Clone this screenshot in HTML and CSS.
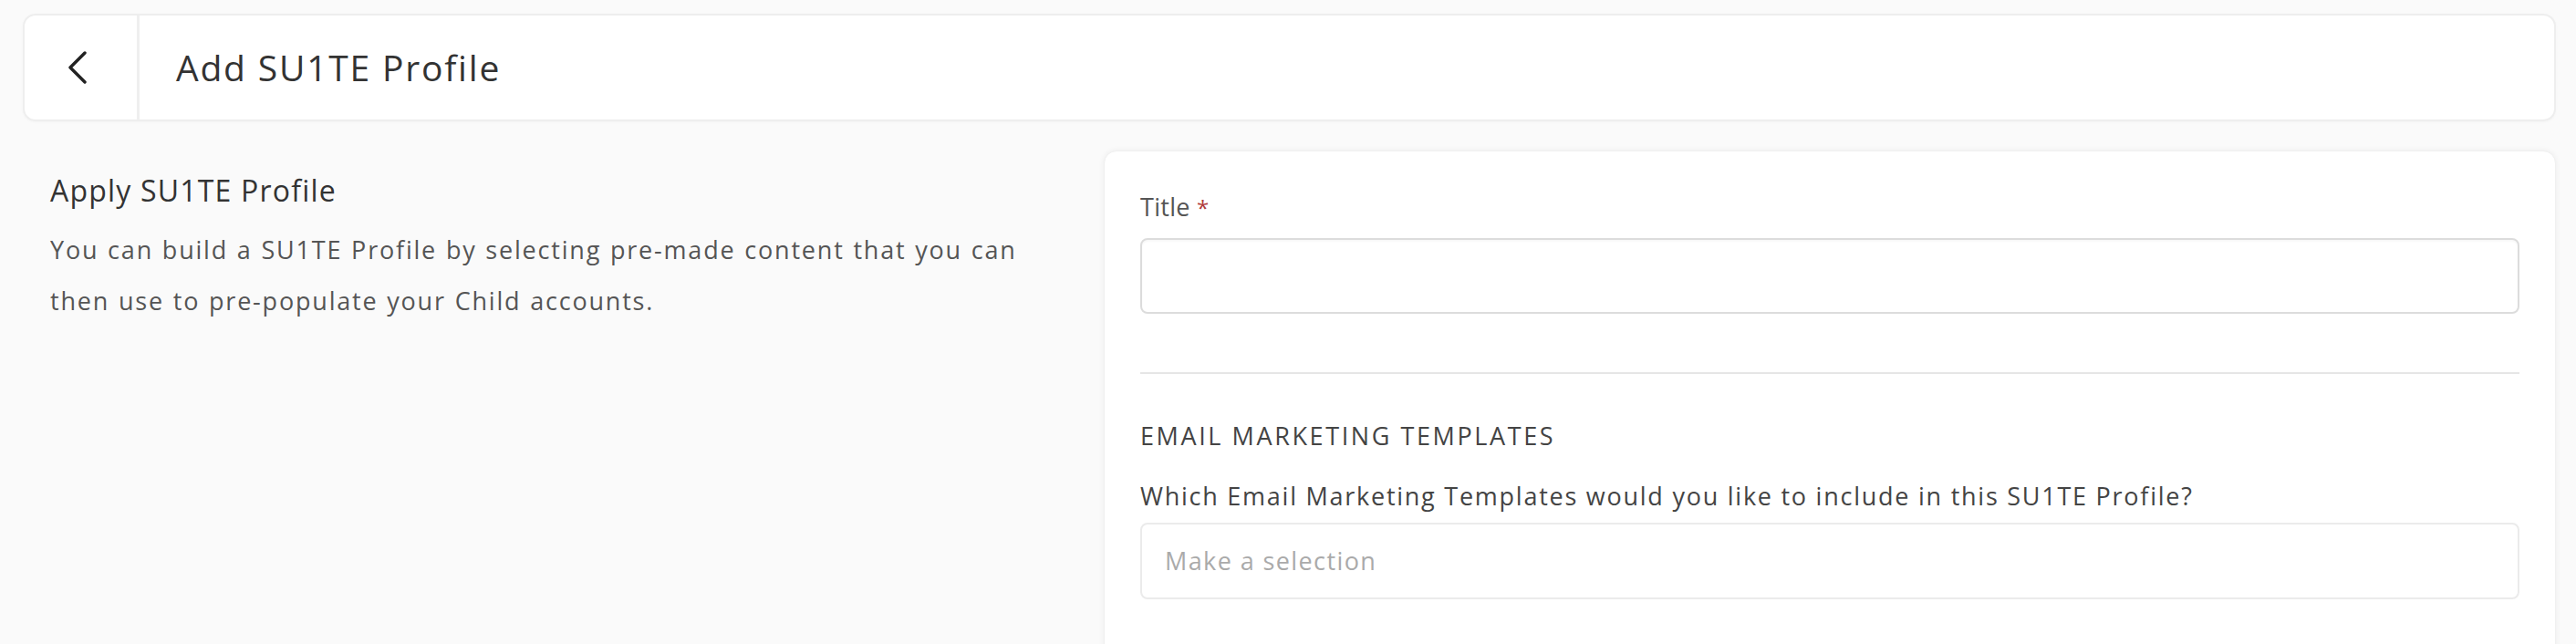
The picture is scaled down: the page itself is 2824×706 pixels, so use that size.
FILE: index.html
```html
<!DOCTYPE html>
<html lang="en">
<head>
<meta charset="utf-8">
<title>Add SU1TE Profile</title>
<link rel="stylesheet" href="styles.css">
</head>
<body>
<div class="page">
  <header class="topbar">
    <button class="back" type="button" aria-label="Back">
      <svg width="22" height="36" viewBox="0 0 22 36" fill="none" stroke="#222" stroke-width="3.4" stroke-linecap="round" stroke-linejoin="round"><path d="M19 2 L3 18 L19 34"/></svg>
    </button>
    <h1 class="topbar-title">Add SU1TE Profile</h1>
  </header>

  <main class="content">
    <section class="intro">
      <h2 class="intro-title">Apply SU1TE Profile</h2>
      <p class="intro-text">You can build a SU1TE Profile by selecting pre-made content that you can then use to pre-populate your Child accounts.</p>
    </section>

    <section class="card">
      <label class="label">Title <span class="req">*</span></label>
      <div class="input"></div>
      <hr class="divider">
      <div class="section-title">EMAIL MARKETING TEMPLATES</div>
      <div class="question">Which Email Marketing Templates would you like to include in this SU1TE Profile?</div>
      <div class="select"><span class="placeholder">Make a selection</span></div>
    </section>
  </main>
</div>
</body>
</html>
```
FILE: styles.css
```css
* { box-sizing: border-box; }
html, body { margin: 0; padding: 0; }
body {
  background: #fafafa;
  font-family: "Open Sans", "Liberation Sans", sans-serif;
  color: #333;
  height: 706px;
  overflow: hidden;
}
.page {
  padding: 15px 22px 0 25px;
}
.topbar {
  display: flex;
  align-items: stretch;
  height: 118px;
  background: #fff;
  border: 2px solid #eeeeee;
  border-radius: 14px;
  box-shadow: 0 1px 3px rgba(0,0,0,0.03);
}
.back {
  width: 126px;
  border: 0;
  border-right: 3px solid #efefef;
  background: transparent;
  display: flex;
  align-items: center;
  justify-content: center;
  padding: 0 7px 0 0;
  margin: 0;
}
.topbar-title {
  margin: 0 0 0 40px;
  align-self: center;
  font-size: 39px;
  font-weight: 400;
  line-height: 50px;
  color: #333;
  letter-spacing: 1.8px;
}
.content {
  display: grid;
  grid-template-columns: 1160px 1fr;
  gap: 25px;
  margin-top: 32px;
}
.intro {
  padding: 22px 30px 0 30px;
}
.intro-title {
  margin: 0 0 15px;
  font-size: 32px;
  font-weight: 400;
  line-height: 44px;
  color: #333;
  letter-spacing: 1.2px;
}
.intro-text {
  margin: 0;
  font-size: 27px;
  line-height: 56px;
  color: #555;
  letter-spacing: 1.8px;
  word-spacing: 1px;
}
.card {
  background: #fff;
  border: 1px solid #f0f0f0;
  border-radius: 14px;
  box-shadow: 0 0 6px rgba(0,0,0,0.06);
  padding: 43px 39px 60px 39px;
  display: flex;
  flex-direction: column;
  min-height: 600px;
}
.label {
  font-size: 27px;
  line-height: 36px;
  color: #555;
  letter-spacing: 0.3px;
}
.req { color: #b03a3a; font-size: 24px; }
.input {
  margin-top: 15px;
  height: 83px;
  border: 2px solid #dcdcdc;
  border-radius: 8px;
  background: #fff;
  box-shadow: inset 0 2px 2px rgba(0,0,0,0.03);
}
.divider {
  margin: 64px 0 0;
  border: 0;
  height: 2px;
  background: #e6e6e6;
}
.section-title {
  margin-top: 50px;
  font-size: 27px;
  line-height: 36px;
  color: #444;
  letter-spacing: 2.6px;
}
.question {
  margin-top: 30px;
  font-size: 27px;
  line-height: 36px;
  color: #444;
  letter-spacing: 1.75px;
}
.select {
  margin-top: 11px;
  height: 84px;
  border: 2px solid #ebebeb;
  border-radius: 8px;
  display: flex;
  align-items: center;
  padding-left: 25px;
}
.placeholder {
  font-size: 27px;
  line-height: 36px;
  color: #aaa;
  letter-spacing: 1.4px;
}
```
